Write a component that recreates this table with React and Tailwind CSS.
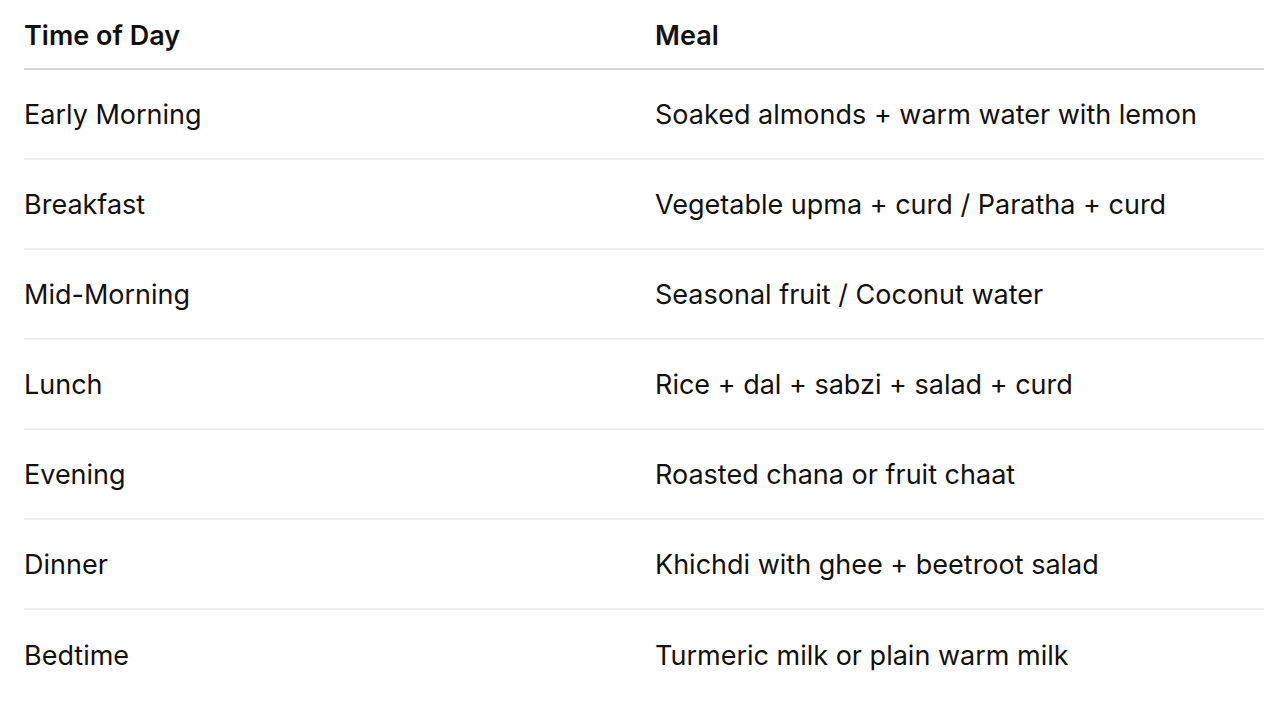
const rows = [
  ['Early Morning', 'Soaked almonds + warm water with lemon'],
  ['Breakfast', 'Vegetable upma + curd / Paratha + curd'],
  ['Mid-Morning', 'Seasonal fruit / Coconut water'],
  ['Lunch', 'Rice + dal + sabzi + salad + curd'],
  ['Evening', 'Roasted chana or fruit chaat'],
  ['Dinner', 'Khichdi with ghee + beetroot salad'],
  ['Bedtime', 'Turmeric milk or plain warm milk'],
];

export default function App() {
  return (
    <div className="min-h-screen bg-white pl-6 font-['Inter',sans-serif] text-[#111111]">
      <div className="grid grid-cols-[631px_1fr] h-[70px] pt-1 items-center border-b-2 border-[#d6d6d6] text-[27px] font-semibold">
        <div>Time of Day</div>
        <div>Meal</div>
      </div>
      {rows.map(([time, meal], i) => (
        <div
          key={time}
          className={`grid grid-cols-[631px_1fr] h-[90px] pt-[2px] items-center text-[27px] ${i < rows.length - 1 ? 'border-b-2 border-[#f0f0f0]' : ''}`}
        >
          <div>{time}</div>
          <div>{meal}</div>
        </div>
      ))}
    </div>
  );
}
